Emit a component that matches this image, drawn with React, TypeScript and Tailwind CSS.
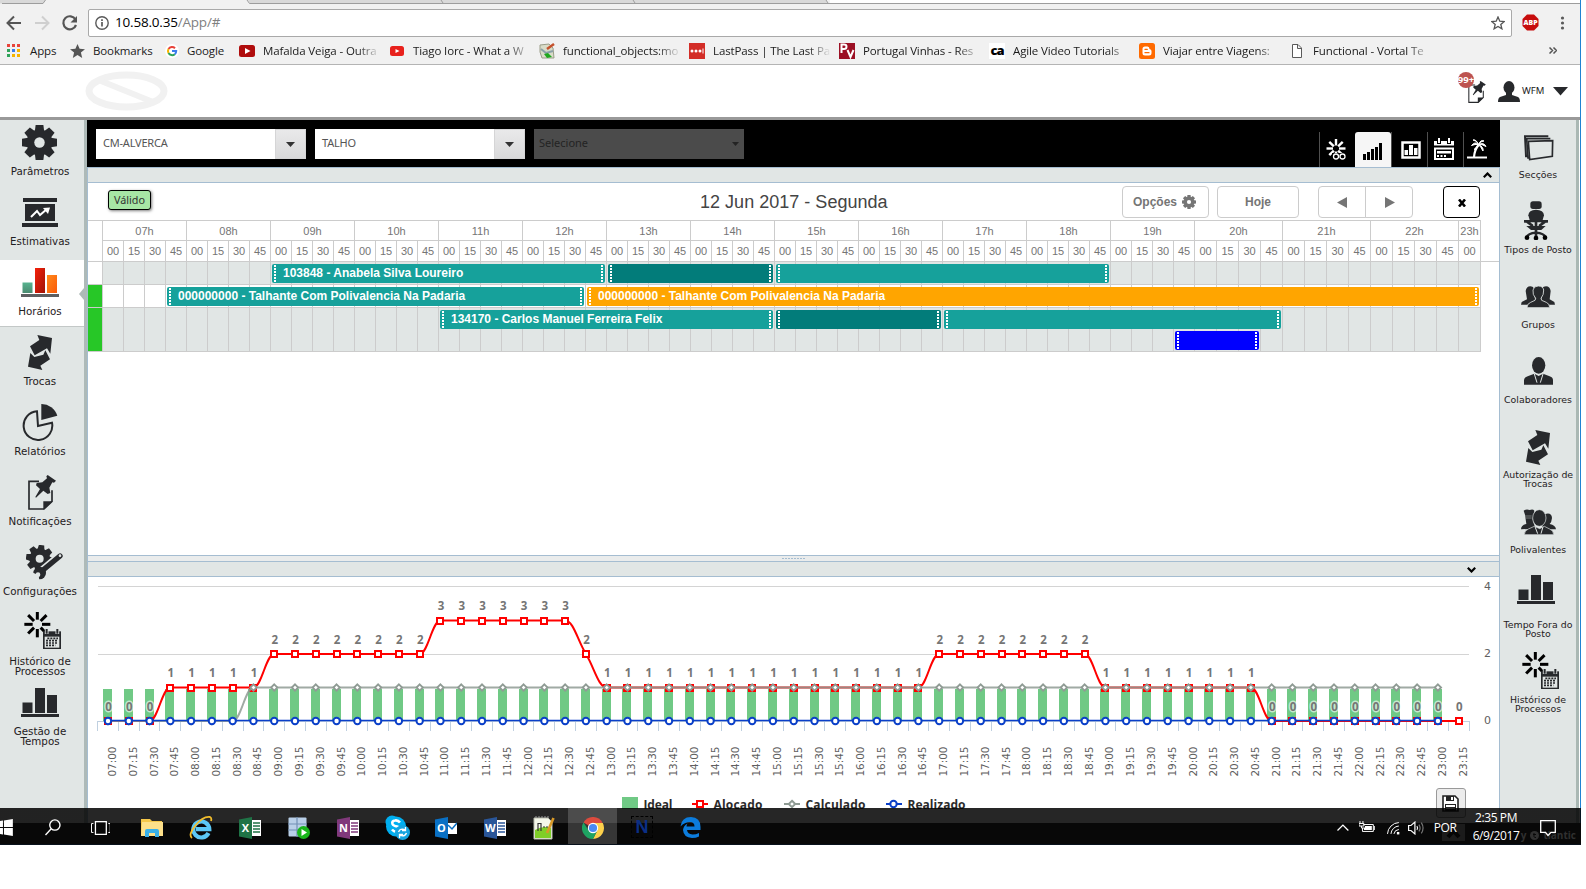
import React from "react";
import type { ReactNode } from "react";

const INK = "#27292c";

/* ---------- shared icons ---------- */

const spokes = [0, 45, 90, 135, 180, 225, 270, 315];

function Gear({ size, color = INK, hole }: { size: number; color?: string; hole: string }) {
  return (
    <svg width={size} height={size} viewBox="-50 -50 100 100">
      {spokes.map((a) => (
        <path key={a} d="M-11 -50H11L14 -28H-14Z" fill={color} transform={`rotate(${a})`} />
      ))}
      <circle r="37" fill={color} />
      <circle r="15" fill={hole} />
    </svg>
  );
}

function BoardIcon() {
  return (
    <svg width="36" height="29" viewBox="0 0 36 29">
      <path d="M1 0H35V4H1ZM0 25H36V29H0ZM3 6H33V23H3Z" fill={INK} />
      <path d="M9 19L15 13L18 17L25 11" stroke="#fff" strokeWidth="2" fill="none" />
      <path d="M21 10L28 9.500L26 16Z" fill="#fff" />
    </svg>
  );
}

function BarsIcon({ colored = false }: { colored?: boolean }) {
  return (
    <svg width="38" height="29" viewBox="0 0 38 29">
      <defs>
        <linearGradient id="barGreen" x1="0" y1="0" x2="0" y2="1">
          <stop offset="0" stopColor="#58b38f" />
          <stop offset="1" stopColor="#4a8a70" />
        </linearGradient>
        <linearGradient id="barRed" x1="0" y1="0" x2="1" y2="1">
          <stop offset="0" stopColor="#f5200a" />
          <stop offset="1" stopColor="#a01306" />
        </linearGradient>
        <linearGradient id="barOrange" x1="0" y1="0" x2="1" y2="1">
          <stop offset="0" stopColor="#ff8a1c" />
          <stop offset="1" stopColor="#fb5a08" />
        </linearGradient>
      </defs>
      <rect x="1.500" y="14.500" width="10" height="10.500" fill={colored ? "url(#barGreen)" : INK} />
      <rect x="14" y="0" width="10" height="25" fill={colored ? "url(#barRed)" : INK} />
      <rect x="26" y="7" width="10" height="18" fill={colored ? "url(#barOrange)" : INK} />
      <rect x="0" y="26" width="38" height="3" fill={colored ? "#5d5f61" : INK} />
    </svg>
  );
}

function SwapIcon() {
  return (
    <svg width="24" height="35" viewBox="84 675 72 105" fill={INK}>
      <path d="M112 675L156 684L151 731L141 715L104 736L90 709L118 690Z" />
      <path d="M91 729L103 741L130 734L136 721L150 748L121 767L127 780L84 770Z" />
    </svg>
  );
}

function PieIcon() {
  return (
    <svg width="36" height="37" viewBox="66 879 108 111">
      <path d="M111 901A43 43 0 1 0 156 935L114 945Z" fill="none" stroke={INK} strokeWidth="6" />
      <path d="M124 879A50 50 0 0 1 172 914L124 927Z" fill={INK} />
    </svg>
  );
}

function PinNote({ w = 28, h = 35 }: { w?: number; h?: number }) {
  return (
    <svg width={w} height={h} viewBox="84 14 84 105">
      <path d="M117 33H87V116H132L156 93V60" fill="none" stroke={INK} strokeWidth="5" />
      <path d="M130 118V93H158Z" fill={INK} />
      <path d="M143 14L168 31L162 37L157 36L148 52L151 68L143 71L130 61L108 82L106 80L120 56L108 45L110 38L127 36L141 24L139 18Z" fill={INK} />
    </svg>
  );
}

function ConfigIcon() {
  return (
    <svg width="37" height="35" viewBox="78 225 111 105">
      <g transform="translate(119 266)">
        {spokes.map((a) => (
          <path key={a} d="M-8 -41H8L11 -25H-11Z" fill={INK} transform={`rotate(${a + 8})`} />
        ))}
        <circle r="31" fill={INK} />
        <circle r="12" fill="#e1e6e5" />
      </g>
      <path d="M128 300L178 258" stroke="#e1e6e5" strokeWidth="24" />
      <path d="M122 306L180 258" stroke={INK} strokeWidth="16" strokeLinecap="round" />
      <circle cx="119" cy="309" r="19" fill={INK} />
      <path d="M95 307L116 315L118 332L96 332Z" fill="#e1e6e5" />
      <circle cx="114" cy="314" r="7" fill="#e1e6e5" />
      <circle cx="180" cy="257" r="4" fill="#e1e6e5" />
    </svg>
  );
}

function HistoryIcon() {
  return (
    <svg width="37" height="37" viewBox="72 426 111 111">
      {spokes.map((a) => (
        <path key={a} d="M112 424V449" stroke="#000" strokeWidth="9" transform={`rotate(${a} 112 463)`} />
      ))}
      <rect x="129" y="484" width="54" height="53" fill={INK} />
      <path d="M140 476V492M172 476V492" stroke="#e1e6e5" strokeWidth="11" />
      <path d="M140 477V491M172 477V491" stroke={INK} strokeWidth="6" />
      <rect x="134" y="500" width="44" height="33" fill="#e1e6e5" />
      <path d="M142 505H174M138 512H174M138 519H174M138 526H166" stroke={INK} strokeWidth="5" strokeDasharray="6 3" />
    </svg>
  );
}

function SectionsIcon() {
  return (
    <svg width="30" height="26" viewBox="764 77 90 78" fill="none" stroke={INK} strokeWidth="4">
      <path d="M837 81H767L770 141H777" strokeWidth="6" />
      <path d="M843 88H772L776 146H780" strokeWidth="5" />
      <path d="M777 96L850 94L849 141L781 151Z" fill="#e1e6e5" strokeWidth="5" />
    </svg>
  );
}

function ChairIcon() {
  return (
    <svg width="24" height="39" viewBox="762 269 72 117">
      <rect x="781" y="270" width="34" height="23" rx="8" fill={INK} />
      <path d="M775 312Q776 296 798 295Q821 296 822 312L816 333H781Z" fill={INK} />
      <path d="M764 330H780M816 330H832M772 332L786 342M824 332L810 342M798 333V375" stroke={INK} strokeWidth="8" strokeLinecap="round" />
      <path d="M769 344H827L814 356H783Z" fill={INK} />
      <path d="M770 378Q774 366 798 364Q822 366 827 378" fill="none" stroke={INK} strokeWidth="7" />
      <circle cx="771" cy="379" r="7" fill="#000" />
      <circle cx="798" cy="380" r="7" fill="#000" />
      <circle cx="825" cy="379" r="7" fill="#000" />
    </svg>
  );
}

function GroupIcon() {
  return (
    <svg width="34" height="22" viewBox="752 530 102 66">
      <path d="M752 586L754 578L770 570L766 545Q768 531 780 531Q788 531 790 536L796 586ZM854 586L852 578L838 570L841 545Q839 531 827 531Q819 531 816 536L812 586Z" fill={INK} />
      <path d="M770 595Q770 583 781 579L794 573L796 567Q786 556 788 542Q790 530 804 530Q818 530 820 542Q821 556 812 567L814 573L828 579Q838 583 838 595Z" fill={INK} stroke="#e1e6e5" strokeWidth="2.500" />
    </svg>
  );
}

function WorkerIcon() {
  return (
    <svg width="29" height="28" viewBox="759 743 87 84">
      <ellipse cx="803" cy="768" rx="20" ry="25" fill={INK} />
      <path d="M759 826V812Q760 803 772 800L790 793L803 800L816 793L834 800Q846 803 846 812V826Z" fill={INK} />
      <path d="M790 794L798 820M816 794L808 820" stroke="#e1e6e5" strokeWidth="3" />
    </svg>
  );
}

function MultiIcon() {
  return (
    <svg width="35" height="26" viewBox="752 119 105 78">
      <path d="M760 124Q768 118 778 122Q788 118 792 124L787 150L790 162L796 178L752 180Q752 168 768 164L764 136Z" fill={INK} />
      <path d="M764 140H784M764 146H784" stroke="#9aa09f" strokeWidth="2" />
      <path d="M824 134Q844 128 845 146Q844 158 838 164Q856 168 857 180H814Z" fill={INK} />
      <path d="M762 196Q762 184 774 179L792 171L808 178L822 171L838 179Q850 184 850 196Z" fill={INK} stroke="#e1e6e5" strokeWidth="2" />
      <ellipse cx="807" cy="146" rx="20" ry="25" fill={INK} stroke="#e1e6e5" strokeWidth="2" />
      <path d="M794 172L802 193M818 172L812 193" stroke="#e1e6e5" strokeWidth="3" />
    </svg>
  );
}

/* ---------- browser chrome ---------- */

function YouTube({ dark = false }: { dark?: boolean }) {
  return (
    <svg width="16" height="16" viewBox="0 0 16 16">
      <rect x={dark ? 0 : 1} y={dark ? 2 : 3} width={dark ? 16 : 14} height={dark ? 12 : 10} rx="2.500" fill={dark ? "#b00d0d" : "#e8211c"} />
      <path d={dark ? "M6 5L11.500 8L6 11Z" : "M6.500 6L10.500 8L6.500 10Z"} fill="#fff" />
    </svg>
  );
}

const bookmarks: { label: string; icon: ReactNode }[] = [
  { label: "Mafalda Veiga - Outra", icon: <YouTube dark /> },
  { label: "Tiago Iorc - What a W", icon: <YouTube /> },
  {
    label: "functional_objects:mo",
    icon: (
      <svg width="16" height="16" viewBox="0 0 16 16">
        <path d="M1 2L10 1L14 5L15 15L3 15L1 9Z" fill="#d9dcc8" stroke="#9a9d88" />
        <path d="M2 6L7 10L14 8" stroke="#8aa0a8" strokeWidth="2" fill="none" />
        <path d="M5 11L9 10L13 14L8 15Z" fill="#1fa81f" />
        <path d="M15 1L8 6" stroke="#c4512c" strokeWidth="2.500" />
      </svg>
    ),
  },
  {
    label: "LastPass | The Last Pa",
    icon: (
      <svg width="16" height="16" viewBox="0 0 16 16">
        <rect width="16" height="16" fill="#d32d27" />
        <path d="M14 5.500V10.500" stroke="#fff" />
        <circle cx="3" cy="8" r="1.500" fill="#fff" />
        <circle cx="7" cy="8" r="1.500" fill="#fff" />
        <circle cx="11" cy="8" r="1.500" fill="#fff" />
      </svg>
    ),
  },
  {
    label: "Portugal Vinhas - Res",
    icon: (
      <svg width="16" height="16" viewBox="0 0 16 16">
        <rect width="16" height="16" fill="#9c1024" />
        <path d="M2.500 10V1.500H5Q7.500 1.500 7.500 3.800Q7.500 6 5 6H2.500M8.500 7L11.500 14L14.500 7" fill="none" stroke="#fff" strokeWidth="2" />
      </svg>
    ),
  },
  {
    label: "Agile Video Tutorials",
    icon: (
      <span className="flex h-4 w-4 items-center justify-center bg-white text-[13px] leading-none font-extrabold tracking-[-1px] text-black">ca</span>
    ),
  },
  {
    label: "Viajar entre Viagens:",
    icon: (
      <svg width="16" height="16" viewBox="0 0 16 16">
        <rect width="16" height="16" rx="2.500" fill="#ff6a00" />
        <path d="M6 3.500H8.500Q10.500 3.500 10.500 6Q12.500 6.500 12.500 8V10Q12.500 12.500 10 12.500H6Q3.500 12.500 3.500 10V6Q3.500 3.500 6 3.500Z" fill="#fff" />
        <path d="M6 6.300H8.300M6 9.700H10" stroke="#ff6a00" strokeWidth="1.300" strokeLinecap="round" />
      </svg>
    ),
  },
  {
    label: "Functional - Vortal Te",
    icon: (
      <svg width="16" height="16" viewBox="0 0 16 16" fill="#fff" stroke="#5a5a5a">
        <path d="M3.500 1.500H9L12.500 5V14.500H3.500ZM8.500 1.500V5.500H12.500" />
      </svg>
    ),
  },
];

const appDots = ["#e8433a", "#e8433a", "#e8433a", "#2fa35a", "#3b7ded", "#f5b400", "#2fa35a", "#f5b400", "#f5b400"];

function BrowserChrome() {
  return (
    <div className="h-[65px] shrink-0 border-b border-[#b4b4b4] bg-[#f1f1f1] font-['Open_Sans','Noto_Sans',sans-serif]">
      <svg className="block" width="1580" height="4" viewBox="0 0 1580 4">
        <rect x="830" width="750" height="3" fill="#fff" />
        <path d="M0 3.500H43L45.500 0H0Z" fill="#d9d9d9" />
        <path d="M248 0L250 3.500H828L826 0Z" fill="#d9d9d9" />
        <path d="M2 3.500H43L45.500 0M247 0L249.500 3.500H1580M441 0L443 3M633 0L635 3M826 0L828 3" fill="none" stroke="#9d9d9d" />
      </svg>
      <div className="flex h-[36px] items-center pt-[1px]">
        <svg width="88" height="28" viewBox="0 0 88 28" fill="none">
          <path d="M21 14H8M14 7.500L7.500 14L14 20.500" stroke="#555" strokeWidth="2" />
          <path d="M35 14H48M42 7.500L48.500 14L42 20.500" stroke="#cfcfcf" strokeWidth="2" />
          <path d="M75.500 10.500A6.500 6.500 0 1 0 76 16" stroke="#555" strokeWidth="2.200" />
          <path d="M77 7V13.500H70.500Z" fill="#555" />
        </svg>
        <div className="flex h-[28px] w-[1424px] items-center rounded-[2px] border border-[#a9a9a9] bg-white pr-[6px] pl-[6px]">
          <svg width="14" height="14" viewBox="0 0 14 14">
            <circle cx="7" cy="7" r="6.200" fill="none" stroke="#5a5a5a" strokeWidth="1.400" />
            <path d="M7 6V10.500M7 3.300V4.900" stroke="#5a5a5a" strokeWidth="1.700" />
          </svg>
          <span className="ml-[6px] text-[13.500px] leading-none tracking-[-0.2px] whitespace-nowrap text-black">
            10.58.0.35<span className="text-[#808080]">/App/#</span>
          </span>
          <svg className="ml-auto" width="14" height="14" viewBox="0 0 14 14">
            <path d="M7 1L8.800 5.200L13.200 5.500L9.800 8.400L10.900 12.800L7 10.400L3.100 12.800L4.200 8.400L0.800 5.500L5.200 5.200Z" fill="none" stroke="#555" strokeWidth="1.300" />
          </svg>
        </div>
        <svg className="ml-[10px]" width="17" height="17" viewBox="0 0 17 17">
          <path d="M5 0.500H12L16.500 5V12L12 16.500H5L0.500 12V5Z" fill="#c70d0d" />
          <text x="1.500" y="11.300" fontSize="7" fontWeight="800" fill="#fff" textLength="14" lengthAdjust="spacingAndGlyphs">ABP</text>
        </svg>
        <svg className="ml-[21px]" width="5" height="14" viewBox="0 0 5 14" fill="#5a5a5a">
          <circle cx="2.500" cy="2" r="1.600" />
          <circle cx="2.500" cy="7" r="1.600" />
          <circle cx="2.500" cy="12" r="1.600" />
        </svg>
      </div>
      <div className="flex h-[21px] items-center text-[11.500px] tracking-[-0.12px] whitespace-nowrap text-[#1a1a1a]">
        <div className="ml-[7px] grid grid-cols-3 gap-[2px]">
          {appDots.map((c, i) => (
            <span key={i} className="h-[3px] w-[3px]" style={{ background: c }} />
          ))}
        </div>
        <span className="ml-[10px] w-[40px]">Apps</span>
        <svg width="15" height="14" viewBox="0 0 15 14">
          <path d="M7.500 0L9.600 4.800L15 5.200L10.900 8.600L12.200 14L7.500 11.100L2.800 14L4.100 8.600L0 5.200L5.400 4.800Z" fill="#555" />
        </svg>
        <span className="ml-[8px] w-[72px]">Bookmarks</span>
        <svg width="14" height="14" viewBox="0 0 14 14" fill="none" strokeWidth="2">
          <circle cx="7" cy="7" r="7" fill="#fff" />
          <path d="M10 4.200A4.200 4.200 0 0 0 3.500 5" stroke="#e8433a" />
          <path d="M3.500 5A4.200 4.200 0 0 0 3.500 9" stroke="#f5b400" />
          <path d="M3.500 9A4.200 4.200 0 0 0 9.800 10.200" stroke="#2fa35a" />
          <path d="M9.800 10.200A4.200 4.200 0 0 0 11.200 7H7" stroke="#3b7ded" />
        </svg>
        <span className="ml-[8px] w-[52px]">Google</span>
        {bookmarks.map((b) => (
          <div key={b.label} className="flex w-[150px] shrink-0 items-center">
            {b.icon}
            <span className="ml-[8px] w-[118px] [mask-image:linear-gradient(to_right,#000_80%,transparent)]">{b.label}</span>
          </div>
        ))}
        <svg className="ml-[110px]" width="8" height="7" viewBox="0 0 8 7" fill="none" stroke="#555" strokeWidth="1.500">
          <path d="M0.500 0.500L3.500 3.500L0.500 6.500M4.500 0.500L7.500 3.500L4.500 6.500" />
        </svg>
      </div>
    </div>
  );
}

function AppHeader() {
  return (
    <header className="flex h-[55px] shrink-0 items-start border-b-[3px] border-[#999] bg-white">
      <svg className="mt-[6px] ml-[82px]" width="88" height="40" viewBox="0 0 88 40" fill="none" stroke="#f1f1f1">
        <ellipse cx="44.500" cy="20" rx="37.500" ry="16" strokeWidth="7" />
        <path d="M19 10L71 31" strokeWidth="6" />
      </svg>
      <div className="relative mt-[16px] ml-[1298px]">
        <PinNote w={18} h={22} />
        <span className="absolute -top-[9px] -left-[10px] flex h-[16px] w-[16px] items-center justify-center rounded-full bg-[#bd5350] font-['Open_Sans',sans-serif] text-[9.500px] font-bold text-white">
          99+
        </span>
      </div>
      <svg className="mt-[16px] ml-[12px]" width="22" height="21" viewBox="0 0 22 21" fill={INK}>
        <ellipse cx="11" cy="6.500" rx="5.500" ry="6.500" />
        <path d="M8 10H14V14L20 16Q22 17 22 21H0Q0 17 2 16L8 14Z" />
      </svg>
      <span className="mt-[19px] ml-[2px] w-[31px] font-['Noto_Sans',sans-serif] text-[9.500px] leading-[14px] text-[#222]">WFM</span>
      <svg className="mt-[22px]" width="15" height="9" viewBox="0 0 15 9" fill={INK}>
        <path d="M0 0H15L7.500 8.500Z" />
      </svg>
    </header>
  );
}

/* ---------- sidebars ---------- */

const leftItems: { label: string[]; icon: ReactNode; active?: boolean }[] = [
  { label: ["Parâmetros"], icon: <Gear size={35} hole="#e1e6e5" /> },
  { label: ["Estimativas"], icon: <BoardIcon /> },
  { label: ["Horários"], icon: <BarsIcon colored />, active: true },
  { label: ["Trocas"], icon: <SwapIcon /> },
  { label: ["Relatórios"], icon: <PieIcon /> },
  { label: ["Notificações"], icon: <span className="pl-[4px]"><PinNote /></span> },
  { label: ["Configurações"], icon: <span className="pl-[9px]"><ConfigIcon /></span> },
  { label: ["Histórico de", "Processos"], icon: <span className="pb-[3px] pl-[5px]"><HistoryIcon /></span> },
  { label: ["Gestão de", "Tempos"], icon: <BarsIcon /> },
];

function LeftSidebar() {
  return (
    <nav className="w-[87px] shrink-0 border-r-[3px] border-[#aebab8] bg-[#e1e6e5]">
      {leftItems.map((it) => (
        <div key={it.label[0]} className="h-[70px]">
          <div
            className={
              it.active
                ? "relative flex h-[67px] flex-col items-center border-b border-[#c3c8c7] bg-white pr-[4px]"
                : "flex flex-col items-center pr-[4px]"
            }
          >
            <div className="flex h-[46px] items-center justify-center pr-[1px] pb-[2px] [&_svg]:block">{it.icon}</div>
            {it.label.map((l) => (
              <span key={l} className="font-['DejaVu_Sans',sans-serif] text-[10.300px] leading-[10px] whitespace-nowrap text-[#1f2022]">
                {l}
              </span>
            ))}
            {it.active && (
              <svg className="absolute top-[28px] right-0" width="5" height="12" viewBox="0 0 5 12">
                <path d="M5 0V12L0 6Z" fill="#aebab8" />
              </svg>
            )}
          </div>
        </div>
      ))}
    </nav>
  );
}

const rightItems: { label: string[]; icon: ReactNode }[] = [
  { label: ["Secções"], icon: <span className="pt-[6px] pl-[2px]"><SectionsIcon /></span> },
  { label: ["Tipos de Posto"], icon: <span className="pr-[4px]"><ChairIcon /></span> },
  { label: ["Grupos"], icon: <span className="pt-[4px]"><GroupIcon /></span> },
  { label: ["Colaboradores"], icon: <span className="pt-[2px]"><WorkerIcon /></span> },
  { label: ["Autorização de", "Trocas"], icon: <span className="pt-[4px]"><SwapIcon /></span> },
  { label: ["Polivalentes"], icon: <span className="pt-[4px]"><MultiIcon /></span> },
  { label: ["Tempo Fora do", "Posto"], icon: <span className="pr-[4px] pb-[11px]"><BarsIcon /></span> },
  { label: ["Histórico de", "Processos"], icon: <span className="pl-[5px]"><HistoryIcon /></span> },
];

function RightSidebar() {
  return (
    <nav className="w-[79px] shrink-0 border-r-[3px] border-[#aab8b4] bg-[#e1e6e5]">
      {rightItems.map((it) => (
        <div key={it.label[0]} className="flex h-[75px] flex-col items-center">
          <div className="flex h-[50px] shrink-0 items-center justify-center [&_svg]:block">{it.icon}</div>
          {it.label.map((l) => (
            <span key={l} className="font-['DejaVu_Sans',sans-serif] text-[9.400px] leading-[9px] whitespace-nowrap text-[#1f2022]">
              {l}
            </span>
          ))}
        </div>
      ))}
    </nav>
  );
}

/* ---------- black toolbar ---------- */

function Combo({ value }: { value: string }) {
  return (
    <div className="mr-[9px] flex h-[30px] w-[210px] bg-white">
      <span className="flex-1 pl-[7px] font-['Noto_Sans',sans-serif] text-[11px] leading-[28px] tracking-[-0.2px] text-[#555]">{value}</span>
      <span className="flex w-[31px] items-center justify-center border border-l border-[#d5d5d6] bg-gradient-to-b from-[#e9e9ea] to-[#d9d9da] pr-[1px]">
        <svg width="9" height="5" viewBox="0 0 9 5" fill="#333">
          <path d="M0 0H9L4.500 5Z" />
        </svg>
      </span>
    </div>
  );
}

const tabIcons: ReactNode[] = [
  <svg key="a" className="-ml-[3px]" width="20" height="21" viewBox="0 0 20 21">
    {spokes.map((a) => (
      <path key={a} d="M10 0V6.500" stroke="#fff" strokeWidth="2.400" transform={`rotate(${a} 10 9.500)`} />
    ))}
    <path d="M6 14H20V21H6Z" fill="#000" />
    <circle cx="10" cy="17.500" r="2.500" fill="none" stroke="#fff" strokeWidth="1.300" />
    <circle cx="16.500" cy="17.500" r="2.500" fill="none" stroke="#fff" strokeWidth="1.300" />
  </svg>,
  <svg key="b" className="mt-[4px] -ml-[1px]" width="19" height="17" viewBox="0 0 19 17" fill="#000">
    <path d="M0 11H3V17H0ZM4 9H7V17H4ZM8 6H11V17H8ZM12 4H15V17H12ZM16 0H19V17H16Z" />
  </svg>,
  <svg key="c" className="mt-[2px] ml-[2px]" width="20" height="18" viewBox="0 0 20 18">
    <rect x="1.500" y="1.500" width="17" height="15" fill="none" stroke="#fff" strokeWidth="2.500" />
    <path d="M3.500 9H7V14H3.500ZM8 4H12V14H8ZM13 7H16.500V14H13Z" fill="#fff" />
  </svg>,
  <svg key="d" className="-ml-[3px]" width="20" height="22" viewBox="0 0 20 22">
    <path d="M0 3H20V22H0Z" fill="#fff" />
    <path d="M3 0H7V6H3ZM13 0H17V6H13ZM0 7.500H20V9.500H0ZM2 11.500H18V20H2Z" fill="#000" />
    <path d="M4 0H6V5H4ZM14 0H16V5H14Z" fill="#fff" />
    <path d="M3 13H17V15.500H3ZM3 17H5V19H3ZM6.500 17H8.500V19H6.500ZM10 17H12V19H10Z" fill="#fff" />
  </svg>,
  <svg key="e" className="-ml-[9px]" width="20" height="20" viewBox="0 0 20 20">
    <path d="M11.500 6Q7.500 11 7 18" fill="none" stroke="#fff" strokeWidth="2.200" />
    <path d="M0 17.500H20V19.500H0Z" fill="#fff" />
    <path d="M11.500 5.500Q8 2 4.500 6.500Q8 5 11.500 5.500Q9 0 6 1Q10 1.500 11.500 5.500Q14 0 17 2Q13.500 2 11.500 5.500Q17 3 19 7.500Q15 5 11.500 5.500Q17 8 16 12Q14 8 11.500 5.500Q11 10 7 10.500Q10 8 11.500 5.500" fill="#fff" stroke="#fff" />
  </svg>,
];

function TopBar() {
  return (
    <div className="flex h-[47px] items-start bg-black pl-[9px]">
      <div className="flex pt-[9px]">
        <Combo value="CM-ALVERCA" />
        <Combo value="TALHO" />
        <div className="flex h-[30px] w-[210px] items-center justify-between bg-[#4b4b4b] pr-[5px] pb-[3px] pl-[5px]">
          <span className="font-['Noto_Sans',sans-serif] text-[11px] leading-none text-[#232323]">Selecione</span>
          <svg className="mt-[2px]" width="7" height="4" viewBox="0 0 7 4" fill="#232323">
            <path d="M0 0H7L3.500 4Z" />
          </svg>
        </div>
      </div>
      <div className="mr-[1px] ml-auto flex pt-[12px]">
        {tabIcons.map((icon, i) => (
          <span
            key={i}
            className={
              i === 1
                ? "flex h-[35px] w-[36px] items-center justify-center rounded-t-[3px] bg-[#f6f6f6]"
                : "flex h-[35px] w-[36px] items-center justify-center border-l border-[#505050] pb-[1px]"
            }
          >
            {icon}
          </span>
        ))}
      </div>
    </div>
  );
}

/* ---------- schedule ---------- */

const hours = Array.from({ length: 17 }, (_, i) => 7 + i);
const quarters = ["00", "15", "30", "45"];
const slots = hours.flatMap((h) => (h === 23 ? [{ h, q: "00" }] : quarters.map((q) => ({ h, q }))));
const slotWidth = (h: number) => (h >= 20 ? 22 : 21);

const gridRows = [
  { h: 23, bg: "#e1e6e5", mark: "#ffffff" },
  { h: 23, bg: "#ffffff", mark: "#27c727" },
  { h: 44, bg: "#e1e6e5", mark: "#27c727" },
];

const TEAL = "#16a19b";
const DEEP = "#027c7a";
const shifts = [
  { x: 184, y: 2, w: 333, c: TEAL, t: "103848 - Anabela Silva Loureiro" },
  { x: 520, y: 2, w: 165, c: DEEP, t: "" },
  { x: 688, y: 2, w: 333, c: TEAL, t: "" },
  { x: 79, y: 25, w: 417, c: TEAL, t: "000000000 - Talhante Com Polivalencia Na Padaria" },
  { x: 499, y: 25, w: 892, c: "#ffa500", t: "000000000 - Talhante Com Polivalencia Na Padaria" },
  { x: 352, y: 48, w: 333, c: TEAL, t: "134170 - Carlos Manuel Ferreira Felix" },
  { x: 688, y: 48, w: 165, c: DEEP, t: "" },
  { x: 856, y: 48, w: 337, c: TEAL, t: "" },
  { x: 1087, y: 69, w: 84, c: "#0000ff", t: "" },
];

function Handle() {
  return <span className="h-[17px] w-[2px] shrink-0 bg-[repeating-linear-gradient(to_bottom,#fff_0px,#fff_2px,transparent_2px,transparent_3px)]" />;
}

function Schedule() {
  return (
    <section className="h-[372px] bg-white font-['Liberation_Sans',Arial,sans-serif]">
      <div className="flex h-[37px]">
        <span className="mt-[7px] ml-[20px] flex h-[20px] w-[43px] items-center justify-center rounded-[3px] border border-black bg-[#a7e6a5] font-['Noto_Sans',sans-serif] text-[10.800px] text-[#333] shadow-[1px_1px_3px_rgba(0,0,0,0.5)]">
          Válido
        </span>
        <h1 className="mt-[7px] ml-[549px] w-[422px] text-[18px] leading-[24px] tracking-[0.02px] whitespace-nowrap text-[#444]">12 Jun 2017 - Segunda</h1>
        <div className="mt-[3px] flex h-[32px] text-[12px] font-bold text-[#757575]">
          <span className="flex w-[87px] items-center justify-center gap-[5px] rounded-[4px] border border-[#ccc] pr-[2px]">
            <span>Opções</span>
            <Gear size={14} color="#757575" hole="#fff" />
          </span>
          <span className="ml-[8px] flex w-[82px] items-center justify-center rounded-[4px] border border-[#ccc]">Hoje</span>
          <span className="ml-[19px] flex w-[48px] items-center justify-center rounded-l-[4px] border border-[#ccc]">
            <svg width="10" height="11" viewBox="0 0 10 11" fill="#757575"><path d="M10 0V11L0 5.500Z" /></svg>
          </span>
          <span className="-ml-[1px] flex w-[48px] items-center justify-center rounded-r-[4px] border border-[#ccc] pl-[2px]">
            <svg width="10" height="11" viewBox="0 0 10 11" fill="#757575"><path d="M0 0V11L10 5.500Z" /></svg>
          </span>
          <span className="ml-[30px] flex w-[37px] items-center justify-center rounded-[4px] border border-black pt-[1px]">
            <svg width="8" height="8" viewBox="0 0 8 8"><path d="M1 0.500L7 7.500M7 0.500L1 7.500" stroke="#000" strokeWidth="2.600" /></svg>
          </span>
        </div>
      </div>
      <div className="flex h-[20px] w-[1393px] border-t border-[#ccc] pl-[14px] text-[11px] text-[#757575]">
        {hours.map((h) => (
          <span
            key={h}
            className="flex shrink-0 items-center justify-center border-l border-[#ccc] pt-[2px]"
            style={{ width: slotWidth(h) * (h === 23 ? 1 : 4) }}
          >
            {String(h).padStart(2, "0")}h
          </span>
        ))}
        <span className="border-l border-[#ccc]" />
      </div>
      <div className="flex h-[22px] border-b border-[#ccc] pl-[14px] text-[11px] text-[#757575]">
        {slots.map((s, i) => (
          <span
            key={i}
            className="flex shrink-0 items-center justify-center border-t border-l border-[#ccc]"
            style={{ width: slotWidth(s.h) }}
          >
            {s.q}
          </span>
        ))}
        <span className="border-l border-[#ccc]" />
      </div>
      <div className="relative">
        {gridRows.map((r, i) => (
          <div key={i} className="flex" style={{ height: r.h }}>
            <span className="w-[14px] border-b border-[#ccc]" style={{ background: r.mark }} />
            {slots.map((s, j) => (
              <span key={j} className="shrink-0 border-b border-l border-[#ccc]" style={{ width: slotWidth(s.h), background: r.bg }} />
            ))}
            <span className="border-l border-[#ccc]" />
          </div>
        ))}
        {shifts.map((s, i) => (
          <div
            key={i}
            className="absolute flex h-[19px] items-center justify-between overflow-hidden rounded-[2px] px-[2px] text-[12px] font-bold whitespace-nowrap text-white"
            style={{ left: s.x, top: s.y, width: s.w, background: s.c }}
          >
            <Handle />
            <span className="flex-1 pb-[1px] pl-[7px] leading-[17px]">{s.t}</span>
            <Handle />
          </div>
        ))}
      </div>
    </section>
  );
}

/* ---------- staffing chart ---------- */

const X0 = 97.6;
const STEP = 20.78;
const px = (i: number) => X0 + STEP * (i + 0.5);
const py = (v: number) => 721 - v * 33.5;
const rep = (v: number, n: number): number[] => Array.from({ length: n }, () => v);

const times = Array.from({ length: 66 }, (_, i) => {
  const m = 7 * 60 + i * 15;
  return `${String(Math.floor(m / 60)).padStart(2, "0")}:${String(m % 60).padStart(2, "0")}`;
});
const alocado = [...rep(0, 3), ...rep(1, 5), ...rep(2, 8), ...rep(3, 7), 2, ...rep(1, 16), ...rep(2, 8), ...rep(1, 8), ...rep(0, 10)];
const calculado = [...rep(0, 7), ...rep(1, 58)];

function spline(vals: number[]) {
  const slope = (i: number) => {
    if (i === 0 || i === vals.length - 1) return 0;
    const a = vals[i] - vals[i - 1];
    const b = vals[i + 1] - vals[i];
    return a * b > 0 ? (a + b) / 2 : 0;
  };
  let d = `M${px(0)} ${py(vals[0])}`;
  for (let i = 1; i < vals.length; i++) {
    d += `C${px(i - 1) + 0.4 * STEP} ${py(vals[i - 1] + 0.4 * slope(i - 1))} ${px(i) - 0.4 * STEP} ${py(vals[i] - 0.4 * slope(i))} ${px(i)} ${py(vals[i])}`;
  }
  return d;
}

const diamond = (x: number, y: number) => `M${x} ${y - 3.200}L${x + 3.200} ${y}L${x} ${y + 3.200}L${x - 3.200} ${y}Z`;

function Chart() {
  return (
    <svg className="block" width="1411" height="246" viewBox="88 577 1411 246">
      <path d="M98 586.500H1469M98 654.500H1469" stroke="#d4d4d4" />
      {times.slice(0, 65).map((t, i) => (
        <rect key={t} x={Math.round(px(i) - 5)} y="689" width="9" height="32" fill="#70c985" />
      ))}
      <path
        d={`M97 721.500H1469` + Array.from({ length: 67 }, (_, i) => `M${Math.floor(X0 + STEP * i) + 0.5} 721V731`).join("")}
        stroke="#c0d0e0"
        fill="none"
      />
      <path d={spline(alocado)} fill="none" stroke="#f00" strokeWidth="2" />
      {alocado.map((v, i) => (
        <rect key={i} x={Math.round(px(i)) - 3} y={Math.round(py(v)) - 3} width="6" height="6" fill="#fff" stroke="#f00" strokeWidth="2" />
      ))}
      <path d={spline(calculado)} fill="none" stroke="#8f9b94" strokeOpacity="0.85" strokeWidth="2" />
      {calculado.map((v, i) => (
        <path key={i} d={diamond(px(i), py(v))} fill="#fff" stroke="#8f9b94" strokeWidth="1.800" />
      ))}
      <path d={`M${px(0)} 720.500H${px(64)}`} stroke="#0a3fc8" strokeWidth="1.500" />
      {times.slice(0, 65).map((t, i) => (
        <circle key={t} cx={px(i)} cy="721" r="3.200" fill="#fff" stroke="#0a3fc8" strokeWidth="2" />
      ))}
      <g fontFamily="'Open Sans','Noto Sans',sans-serif" fontSize="11.500" fontWeight="700" fill="#757575" textAnchor="middle">
        {alocado.map((v, i) => (
          <text
            key={i}
            x={px(i) + 0.5}
            y={py(v) - 10.500}
            stroke="#fff"
            strokeOpacity={v === 0 ? 0.6 : 0}
            strokeWidth="3"
            paintOrder="stroke"
          >
            {v}
          </text>
        ))}
      </g>
      <g fontFamily="'DejaVu Sans',sans-serif" fontSize="10.500" fill="#606060">
        {times.map((t, i) => (
          <text key={t} transform={`translate(${px(i) + 8} 776.500) rotate(-90)`} textLength="30">{t}</text>
        ))}
        <text x="1484" y="590" fontSize="11">4</text>
        <text x="1484" y="657" fontSize="11">2</text>
        <text x="1484" y="724" fontSize="11">0</text>
      </g>
      <rect x="622" y="797" width="16" height="12" fill="#70c985" />
      <path d="M692 804H708" stroke="#f00" strokeWidth="2" />
      <rect x="697" y="801" width="6" height="6" fill="#fff" stroke="#f00" strokeWidth="2" />
      <path d="M784 804H800" stroke="#8f9b94" strokeWidth="2" />
      <path d={diamond(792, 804)} fill="#fff" stroke="#8f9b94" strokeWidth="2" />
      <path d="M886 804H902" stroke="#0a3fc8" strokeWidth="2" />
      <circle cx="893.500" cy="804" r="3.200" fill="#fff" stroke="#0a3fc8" strokeWidth="2" />
      <g fontFamily="'Open Sans','Noto Sans',sans-serif" fontSize="12" fontWeight="700" fill="#2b2b2b">
        <text x="643.500" y="808.500" textLength="29">Ideal</text>
        <text x="713.500" y="808.500" textLength="49">Alocado</text>
        <text x="805.500" y="808.500" textLength="60">Calculado</text>
        <text x="907.500" y="808.500" textLength="58">Realizado</text>
      </g>
    </svg>
  );
}

/* ---------- taskbar ---------- */

function OfficeIcon({ letter, color }: { letter: string; color: string }) {
  return (
    <span className="relative flex h-[22px] w-[22px] items-center">
      <svg width="22" height="22" viewBox="0 0 22 22">
        <rect x="12" y="3" width="10" height="16" fill="#fff" />
        <path d="M14 6H21M14 9H21M14 12H21M14 15H21" stroke={color} strokeWidth="1.400" />
        <path d="M0 2.500L13 0V22L0 19.500Z" fill={color} />
      </svg>
      <span className="absolute left-0 w-[13px] text-center text-[11px] leading-none font-bold text-white">{letter}</span>
    </span>
  );
}

const apps: ReactNode[] = [
  <svg key="folder" width="22" height="18" viewBox="0 0 22 18">
    <path d="M0 0H9L11 2H21V17H0Z" fill="#f5c74a" />
    <path d="M1 3H22V17H0Z" fill="#fde08a" />
    <path d="M4 18V12Q4 10 6 10H16Q18 10 18 12V18H14V14H8V18Z" fill="#3ab0e8" />
  </svg>,
  <svg key="ie" width="24" height="24" viewBox="0 0 24 24" fill="none">
    <path d="M19.500 17A8 8 0 1 1 20.300 13.200H7" stroke="#5cc8f5" strokeWidth="4.200" />
    <path d="M3 22Q-1 19 6 10Q14 0 21 1Q23 2 22 5" stroke="#f2bd2c" strokeWidth="1.800" />
  </svg>,
  <OfficeIcon key="x" letter="X" color="#1f7346" />,
  <svg key="db" width="22" height="22" viewBox="0 0 22 22">
    <rect x="0.500" y="0.500" width="18" height="19" rx="1" fill="#b9cfe8" />
    <path d="M0 7H19M0 13H19M9 0V20" stroke="#7390b4" strokeWidth="1.200" />
    <circle cx="15.500" cy="15.500" r="6.500" fill="#19b51b" />
    <path d="M13.500 12V19L19 15.500Z" fill="#fff" />
  </svg>,
  <OfficeIcon key="n" letter="N" color="#80397b" />,
  <svg key="skype" className="ml-[2px]" width="25" height="25" viewBox="0 0 25 25">
    <circle cx="7" cy="7" r="6.500" fill="#00aff0" />
    <circle cx="11" cy="11.500" r="10" fill="#00aff0" />
    <path d="M15 7.500Q13 5 10 5.500Q6.500 6 7.500 9Q8.500 11 12 11.500Q15.500 12.500 14 15.500Q10 18 7 14.500" fill="none" stroke="#fff" strokeWidth="2.600" />
    <circle cx="17.500" cy="17.500" r="7.500" fill="#15a4e0" />
    <path d="M13.500 17Q15 13 20 14.500M21.500 18Q20 22 15 20.500M20.500 12V15.500H17M14.500 23V19.500H18" fill="none" stroke="#fff" strokeWidth="1.300" />
  </svg>,
  <span key="outlook" className="relative flex h-[22px] w-[22px] items-center">
    <svg width="22" height="22" viewBox="0 0 22 22">
      <rect x="12" y="6" width="10" height="11" fill="#fff" />
      <path d="M13 8L17 12L22 6" fill="none" stroke="#0a70c4" strokeWidth="1.500" />
      <path d="M0 2.500L13 0V22L0 19.500Z" fill="#0a70c4" />
    </svg>
    <span className="absolute left-0 w-[13px] text-center text-[11px] leading-none font-bold text-white">O</span>
  </span>,
  <OfficeIcon key="w" letter="W" color="#2a5699" />,
  <svg key="npp" width="22" height="24" viewBox="0 0 22 24">
    <path d="M1 2H15L19 6V23H1Z" fill="#f4f7ea" stroke="#b9bdae" />
    <path d="M2 14Q10 9 18 12V22H2Z" fill="#7fce28" />
    <path d="M5 7V15M5 7.500H8V15M10 11H12M13 11H15" stroke="#333" strokeWidth="1.200" fill="none" />
    <path d="M20.500 2L14 17" stroke="#d99a28" strokeWidth="2.600" />
    <path d="M2 1H16" stroke="#999" strokeDasharray="2 1" />
  </svg>,
  <svg key="chrome" width="22" height="22" viewBox="-11 -11 22 22">
    <path d="M0 0L-9.530 -5.500A11 11 0 0 1 9.530 -5.500Z" fill="#dd4b3e" />
    <path d="M0 -5H9.800A11 11 0 0 1 0 11L4.300 2.500Z" fill="#fdd04b" />
    <path d="M-9.530 -5.500L-4.300 2.500L4.300 2.500L0 11A11 11 0 0 1 -9.530 -5.500Z" fill="#1ea362" />
    <circle r="5.200" fill="#fff" />
    <circle r="4.100" fill="#4a8af4" />
  </svg>,
  <span key="nn" className="mb-[2px] flex h-[22px] w-[22px] items-center justify-center border border-dashed border-black font-['Liberation_Sans',sans-serif] text-[18px] leading-none font-bold text-[#0b2f86]">
    N
  </span>,
  <svg key="edge" width="21" height="21" viewBox="0 0 21 21">
    <path d="M0.500 9.500Q1.500 0 11 0Q20.500 0.500 20.500 10V13H7Q7.500 17 12.500 17.500Q16 17.500 19 16V19.500Q16 21 12 21Q3.500 20.500 3 13Q3.500 8.500 7.500 6.500Q6.500 8 6.500 9.500H14.500Q14.500 5 10 5Q4.500 5 0.500 9.500Z" fill="#0c7cdc" />
  </svg>,
];

function Taskbar() {
  return (
    <footer className="relative -mt-[15px] flex h-[37px] w-[1581px] shrink-0 items-center border-b border-[#08111c] bg-[linear-gradient(rgba(0,0,0,0.85)_0px,rgba(0,0,0,0.85)_15px,#080808_15px)] font-['Open_Sans','Noto_Sans',sans-serif] text-white">
      <svg className="mt-[3px] ml-0" width="13" height="17" viewBox="0 0 13 17" fill="#fff">
        <path d="M0 2L3 1.500V8H0ZM4 1.300L13 0V8H4ZM0 9H3V15.500L0 15ZM4 9H13V17L4 15.700Z" />
      </svg>
      <svg className="mt-[3px] ml-[32px]" width="16" height="17" viewBox="0 0 16 17" fill="none" stroke="#fff" strokeWidth="1.400">
        <circle cx="10" cy="6" r="5.200" />
        <path d="M6.300 9.800L0.500 16" />
      </svg>
      <svg className="mt-[3px] ml-[30px]" width="20" height="14" viewBox="0 0 20 14" fill="none" stroke="#fff">
        <path d="M4.500 0.500H15.500V13.500H4.500Z" strokeWidth="1.300" />
        <path d="M2.500 2.500H0.500V11.500H2.500M17.500 2.500H19.500V11.500H17.500" />
      </svg>
      <div className="ml-[17px] flex h-full">
        {apps.map((icon, i) => (
          <span
            key={i}
            className={i === 9 ? "flex h-full w-[49px] items-center justify-center bg-[linear-gradient(#4c4c4c_0px,#4c4c4c_15px,#363636_15px)] pt-[3px]" : "flex h-full w-[49px] items-center justify-center pt-[3px]"}
          >
            {icon}
          </span>
        ))}
      </div>
      <svg className="mt-[3px] ml-[622px]" width="12" height="7" viewBox="0 0 12 7" fill="none" stroke="#fff" strokeWidth="1.300">
        <path d="M0.500 6.500L6 1L11.500 6.500" />
      </svg>
      <svg className="mt-[2px] ml-[10px]" width="16" height="12" viewBox="0 0 16 12">
        <path d="M4.500 3.500H14.500V10.500H3.500V7" fill="none" stroke="#fff" />
        <path d="M6 5H13V9H5V7H6ZM15 5H16V9H15Z" fill="#fff" />
        <path d="M1 0V2M4 0V2M0 2.500H5V5H0ZM2.500 5V7H6" stroke="#fff" fill="none" />
      </svg>
      <svg className="mt-[5px] ml-[12px]" width="13" height="13" viewBox="0 0 13 13" fill="none" stroke="#fff">
        <path d="M0.500 12A12 12 0 0 1 12 0.500M4 12A8.500 8.500 0 0 1 12 4M7 12A5.500 5.500 0 0 1 12 7.500" />
        <rect x="10" y="10" width="2.500" height="2.500" fill="#fff" stroke="none" />
      </svg>
      <svg className="mt-[4px] ml-[8px]" width="17" height="14" viewBox="0 0 17 14" fill="none" stroke="#fff" strokeWidth="1.200">
        <path d="M0.600 4.500H3L7 1V13L3 9.500H0.600Z" />
        <path d="M9 5Q10.500 7 9 9" />
        <path d="M11 3.500Q13.500 7 11 10.500M13.500 1.500Q17 7 13.500 12.500" stroke="#777" />
      </svg>
      <div className="relative ml-[9px] flex h-full w-[24px] items-center">
        <svg className="absolute top-[16px] left-[8px]" width="23" height="17" viewBox="0 0 23 17">
          <rect width="23" height="17" fill="#1b1b1b" />
          <path d="M6 13L11.500 7L17 13" stroke="#050505" strokeWidth="4" fill="none" />
        </svg>
        <span className="relative mt-[3px] text-[12px] leading-none tracking-[-0.3px]">POR</span>
      </div>
      <div className="mt-[2px] ml-[14px] flex w-[50px] flex-col items-center text-[12px] leading-[18px] tracking-[-0.4px] whitespace-nowrap">
        <span>2:35 PM</span>
        <span>6/9/2017</span>
      </div>
      <div className="relative ml-[1px] flex h-full w-[60px] items-center">
        <span className="absolute top-[20px] left-[-1px] flex items-center text-[10px] leading-[14px] font-bold whitespace-nowrap text-[#303030]">
          y
          <svg className="mx-[4px]" width="9" height="9" viewBox="0 0 9 9">
            <circle cx="4.500" cy="4.500" r="4.500" fill="#303030" />
            <path d="M4 2V5.500Q4.200 6.800 6 6.500M3 3.500H6" stroke="#080808" fill="none" />
          </svg>
          tlantic
        </span>
        <svg className="relative mt-[4px] ml-[18px]" width="16" height="17" viewBox="0 0 16 17" fill="none" stroke="#fff" strokeWidth="1.300">
          <path d="M0.700 0.700H15.300V12.300H11L8 15.500L5.500 12.300H0.700Z" />
        </svg>
      </div>
    </footer>
  );
}

/* ---------- page ---------- */

export default function App() {
  return (
    <div className="flex h-[889px] w-[1586px] flex-col overflow-hidden bg-white">
      <div className="flex h-[823px] w-[1581px] shrink-0 flex-col border-r border-[#1f82d2]">
        <BrowserChrome />
        <AppHeader />
        <div className="flex h-[703px]">
          <LeftSidebar />
          <main className="w-[1413px] shrink-0">
            <TopBar />
            <div className="h-[656px] border-r border-l border-[#a5bdd1]">
              <div className="flex h-[16px] items-center justify-end border-t border-b border-[#a5bdd1] bg-[#e1e6e5] pr-[7px]">
                <svg width="9" height="6" viewBox="0 0 9 6" fill="none" stroke="#000" strokeWidth="2.200">
                  <path d="M0.800 5.200L4.500 1.500L8.200 5.200" />
                </svg>
              </div>
              <Schedule />
              <div className="flex h-[6px] items-center justify-center border-t border-[#a5bdd1] bg-[#eaecec]">
                <span className="h-px w-[24px] bg-[repeating-linear-gradient(to_right,#a5bdd1_0px,#a5bdd1_2px,transparent_2px,transparent_3px)]" />
              </div>
              <div className="flex h-[16px] items-center justify-end border-t border-b border-[#a5bdd1] bg-[#e1e6e5] pt-[1px] pr-[23px]">
                <svg width="9" height="6" viewBox="0 0 9 6" fill="none" stroke="#000" strokeWidth="2.200">
                  <path d="M0.800 0.800L4.500 4.500L8.200 0.800" />
                </svg>
              </div>
              <div className="relative">
                <Chart />
                <span className="absolute top-[211px] left-[1348px] flex h-[30px] w-[30px] items-start justify-center rounded-[3px] border border-[#999] bg-[#ececec] pt-[6px] pr-[2px]">
                  <svg width="17" height="17" viewBox="0 0 17 17">
                    <path d="M1 1H13L16 4V16H1Z" fill="#fff" stroke="#222" strokeWidth="1.600" />
                    <path d="M4 1H12V6H4ZM3 9H14V16H3Z" fill="#222" />
                    <path d="M9 2H11V5H9ZM4 10H13V12H4ZM4 13H13V14H4Z" fill="#fff" />
                  </svg>
                </span>
              </div>
            </div>
          </main>
          <RightSidebar />
        </div>
      </div>
      <Taskbar />
    </div>
  );
}
